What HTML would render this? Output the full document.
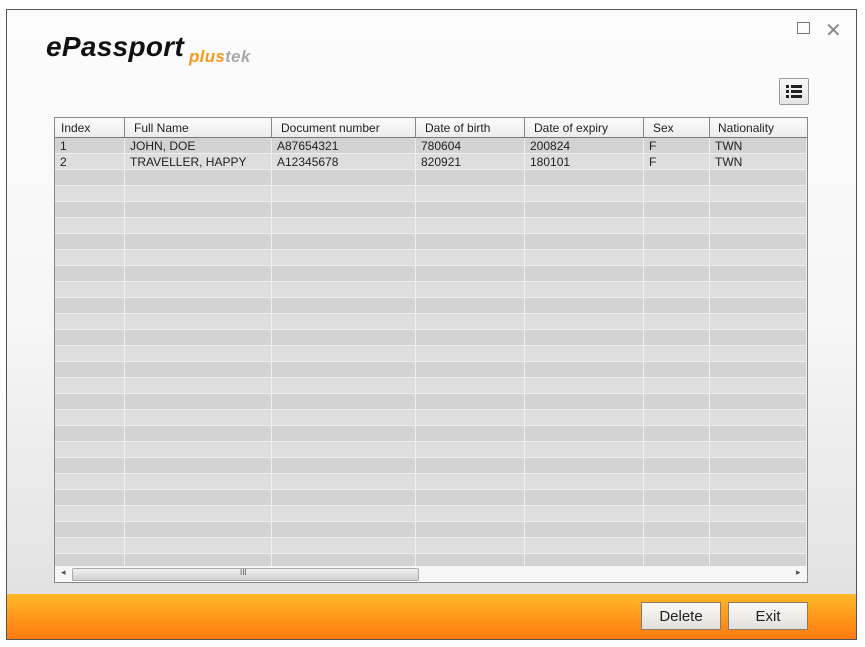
<!DOCTYPE html>
<html><head><meta charset="utf-8"><style>
body{margin:0;width:865px;height:647px;background:#fff;position:relative;overflow:hidden;font-family:"Liberation Sans",sans-serif;}
.win{position:absolute;left:6px;top:9px;width:849px;height:629px;border:1px solid #555;background:linear-gradient(#fcfcfc 0%,#f6f6f6 50%,#e2e2e2 92%);overflow:hidden}
.logo{position:absolute;left:39px;top:21px;font:italic bold 28px "Liberation Sans",sans-serif;color:#111;letter-spacing:0.3px}
.plus{position:absolute;left:182px;top:37px;font:italic bold 17px "Liberation Sans",sans-serif;color:#f39a1a;letter-spacing:0.3px}
.plus span{color:#aaa}
.ctl{position:absolute;top:13px;color:#888;font-size:16px}
.lb{position:absolute;left:772px;top:68px;width:28px;height:25px;border:1px solid #999;border-radius:2px;background:linear-gradient(#fafafa,#e4e4e4)}
.tbl{position:absolute;left:47px;top:107px;width:752px;height:464px;border:1px solid #888;background:#f2f2f2;overflow:hidden}
.hdr{position:absolute;left:0;top:0;height:19px;width:752px;background:linear-gradient(#fbfbfb,#ececec);border-bottom:1px solid #777}
.hdr div{position:absolute;top:0;height:19px;border-right:1px solid #888;font-size:12px;color:#222;line-height:20px;padding-left:6px;box-sizing:border-box}
.row{position:absolute;left:0;width:752px;height:16px;border-bottom:1px solid #eee;box-sizing:border-box}
.row div{position:absolute;top:0;height:16px;border-right:1px solid #eee;font-size:12px;color:#222;line-height:17px;padding-left:5px;box-sizing:border-box}
.sb{position:absolute;left:0;top:448px;width:752px;height:16px;background:#f6f6f6}
.thumb{position:absolute;left:17px;top:2px;width:345px;height:11px;border:1px solid #aaa;border-radius:2px;background:linear-gradient(#f0f0f0,#d0d0d0)}
.orange{position:absolute;left:0;top:584px;width:849px;height:45px;background:linear-gradient(#ffb828,#ff7a10)}
.btn{position:absolute;top:8px;height:28px;border:1px solid #8a7a6a;background:linear-gradient(#fbfaf8,#e2dfd9);font-size:15px;color:#222;text-align:center;line-height:28px;box-sizing:border-box}
</style></head><body>
<div class="win">
<div class="logo">ePassport</div>
<div class="plus">plus<span>tek</span></div>
<div class="ctl" style="left:790px;top:12px;width:11px;height:10px;border:1.5px solid #777"></div>
<div class="ctl" style="left:818px;top:8px;font-size:20px">✕</div>
<div class="lb"><svg width="28" height="25" viewBox="0 0 28 25"><g fill="#222"><rect x="6" y="6" width="3" height="3"/><rect x="11" y="6" width="11" height="3"/><rect x="6" y="11" width="3" height="3"/><rect x="11" y="11" width="11" height="3"/><rect x="6" y="16" width="3" height="3"/><rect x="11" y="16" width="11" height="3"/></g></svg></div>
<div class="tbl" id="t">
<div class="hdr">
<div style="left:0;width:70px">Index</div>
<div style="left:70px;width:147px;padding-left:9px">Full Name</div>
<div style="left:217px;width:144px;padding-left:9px">Document number</div>
<div style="left:361px;width:109px;padding-left:9px">Date of birth</div>
<div style="left:470px;width:119px;padding-left:9px">Date of expiry</div>
<div style="left:589px;width:66px;padding-left:9px">Sex</div>
<div style="left:655px;width:97px;padding-left:8px;border-right:none">Nationality</div>
</div>
<div id="rows"></div>
<div class="sb"><span style="position:absolute;left:6px;top:1px;font-size:9px;color:#555">◂</span><div class="thumb"><span style="position:absolute;left:167px;top:-1px;font-size:8px;color:#555">III</span></div><span style="position:absolute;left:741px;top:1px;font-size:9px;color:#555">▸</span></div>
</div>
<div class="orange">
<div class="btn" style="left:634px;width:80px">Delete</div>
<div class="btn" style="left:721px;width:80px">Exit</div>
</div>
</div>
<script>
var L=[0,70,217,361,470,589,655,752];
var d=[["1","JOHN, DOE","A87654321","780604","200824","F","TWN"],["2","TRAVELLER, HAPPY","A12345678","820921","180101","F","TWN"]];
var h="";
for(var r=0;r<27;r++){
 h+='<div class="row" style="top:'+(20+r*16)+'px;background:'+(r%2?'#dedede':'#d3d3d3')+'">';
 for(var c=0;c<7;c++){h+='<div style="left:'+L[c]+'px;width:'+(L[c+1]-L[c])+'px">'+(d[r]?d[r][c]:'')+'</div>';}
 h+='</div>';
}
document.getElementById('rows').innerHTML=h;
</script>
</body></html>
